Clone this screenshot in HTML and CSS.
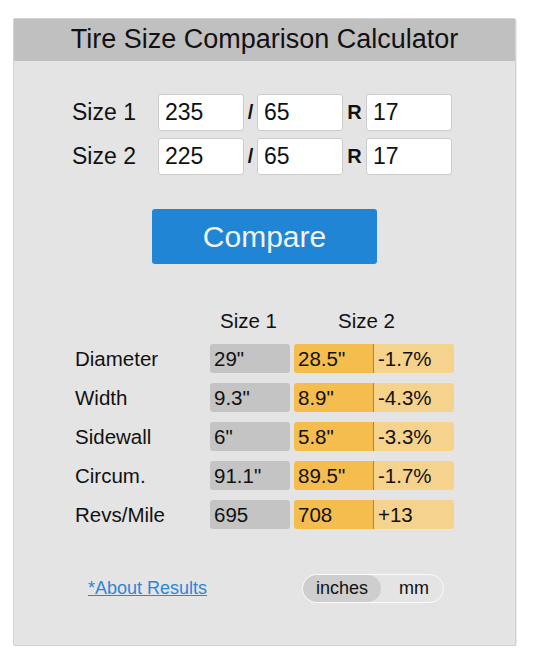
FILE: index.html
```html
<!DOCTYPE html>
<html lang="en">
<head>
<meta charset="utf-8">
<title>Tire Size Comparison Calculator</title>
<link rel="stylesheet" href="styles.css">
</head>
<body>
<div class="panel">
  <div class="panel-header">Tire Size Comparison Calculator</div>
  <div class="panel-body">
    <div class="size-form">
      <div class="size-row">
        <span class="size-label">Size 1</span>
        <input class="size-input" type="text" value="235">
        <span class="sep">/</span>
        <input class="size-input" type="text" value="65">
        <span class="sep sep-r">R</span>
        <input class="size-input" type="text" value="17">
      </div>
      <div class="size-row">
        <span class="size-label">Size 2</span>
        <input class="size-input" type="text" value="225">
        <span class="sep">/</span>
        <input class="size-input" type="text" value="65">
        <span class="sep sep-r">R</span>
        <input class="size-input" type="text" value="17">
      </div>
    </div>

    <button class="compare-btn" type="button">Compare</button>

    <div class="results">
      <div class="results-head">
        <span></span>
        <span class="head-1">Size 1</span>
        <span class="head-2">Size 2</span>
      </div>
      <div class="results-grid">
        <span class="row-label">Diameter</span>
        <span class="cell cell-1">29"</span>
        <span class="pair"><span class="cell cell-2">28.5"</span><span class="cell cell-diff">-1.7%</span></span>

        <span class="row-label">Width</span>
        <span class="cell cell-1">9.3"</span>
        <span class="pair"><span class="cell cell-2">8.9"</span><span class="cell cell-diff">-4.3%</span></span>

        <span class="row-label">Sidewall</span>
        <span class="cell cell-1">6"</span>
        <span class="pair"><span class="cell cell-2">5.8"</span><span class="cell cell-diff">-3.3%</span></span>

        <span class="row-label">Circum.</span>
        <span class="cell cell-1">91.1"</span>
        <span class="pair"><span class="cell cell-2">89.5"</span><span class="cell cell-diff">-1.7%</span></span>

        <span class="row-label">Revs/Mile</span>
        <span class="cell cell-1">695</span>
        <span class="pair"><span class="cell cell-2">708</span><span class="cell cell-diff">+13</span></span>
      </div>
    </div>

    <div class="footer">
      <a class="about-link" href="#">*About Results</a>
      <div class="unit-toggle">
        <span class="unit unit-active">inches</span>
        <span class="unit">mm</span>
      </div>
    </div>
  </div>
</div>
</body>
</html>
```

FILE: styles.css
```css
* {
  box-sizing: border-box;
}

html, body {
  margin: 0;
  padding: 0;
  background: #ffffff;
}

body {
  font-family: "Liberation Sans", Arial, sans-serif;
  color: #111111;
}

.panel {
  width: 503px;
  margin: 18px 0 0 13px;
  border: 1px solid #d2d2d2;
  border-radius: 2px;
  background: #e4e4e4;
  box-shadow: 1px 1px 1px rgba(0, 0, 0, 0.08);
}

.panel-header {
  background: #c0c0c0;
  height: 42px;
  padding-top: 5px;
  font-size: 27px;
  line-height: 30px;
  text-align: center;
  color: #111111;
}

.panel-body {
  padding: 33px 0 42px 0;
}

.size-form {
  padding-left: 58px;
  display: flex;
  flex-direction: column;
  gap: 7px;
}

.size-row {
  display: grid;
  grid-template-columns: 86px 86px 13px 86px 23px 86px;
  height: 37px;
  align-items: center;
}

.size-label {
  font-size: 23px;
  line-height: 37px;
}

.size-input {
  width: 86px;
  height: 37px;
  border: 1px solid #cccccc;
  border-radius: 3px;
  background: #ffffff;
  padding: 0 0 0 6px;
  margin: 0;
  font-family: "Liberation Sans", Arial, sans-serif;
  font-size: 23px;
  color: #111111;
  outline: none;
}

.sep {
  text-align: center;
  font-weight: bold;
  font-size: 20px;
  line-height: 37px;
}

.compare-btn {
  display: block;
  width: 225px;
  height: 55px;
  margin: 34px auto 0 auto;
  border: none;
  border-radius: 3px;
  background: #2185d5;
  color: #f2f2f2;
  font-family: "Liberation Sans", Arial, sans-serif;
  font-size: 30px;
  padding: 0;
}

.results {
  margin-top: 45px;
  padding-left: 60px;
}

.results-head {
  display: grid;
  grid-template-columns: 136px 80px 164px;
  height: 24px;
  margin-bottom: 11px;
  font-size: 20.5px;
  line-height: 24px;
}

.head-1 {
  text-align: center;
  padding-right: 3px;
}

.head-2 {
  text-align: center;
  padding-right: 11px;
}

.results-grid {
  display: grid;
  grid-template-columns: 132px 80px 160px;
  column-gap: 4px;
  row-gap: 10px;
}

.row-label {
  font-size: 20.5px;
  line-height: 29px;
  height: 29px;
  padding-left: 1px;
}

.cell {
  display: block;
  height: 29px;
  font-size: 20.5px;
  line-height: 29px;
  padding: 0 0 0 4px;
  color: #111111;
}

.cell-1 {
  background: #c4c4c4;
  border-radius: 3px;
}

.pair {
  display: flex;
  border-radius: 3px;
  overflow: hidden;
}

.cell-2 {
  width: 80px;
  background: #f4bd4e;
  border-right: 1px solid #7f8a94;
}

.cell-diff {
  width: 80px;
  background: #f6d38d;
}

.footer {
  margin-top: 45px;
  display: flex;
  align-items: center;
  justify-content: space-between;
  padding: 0 71px 0 74px;
}

.about-link {
  font-size: 18px;
  color: #2b87d6;
  text-decoration: underline;
}

.unit-toggle {
  display: flex;
  width: 142px;
  height: 29px;
  border: 1px solid #fbfbfb;
  border-radius: 15px;
  overflow: hidden;
}

.unit {
  display: block;
  font-size: 18px;
  line-height: 27px;
  text-align: center;
  width: 62px;
  padding-left: 4px;
}

.unit-active {
  width: 78px;
  padding-left: 0;
  background: #cecece;
  border-radius: 14px;
}
```
